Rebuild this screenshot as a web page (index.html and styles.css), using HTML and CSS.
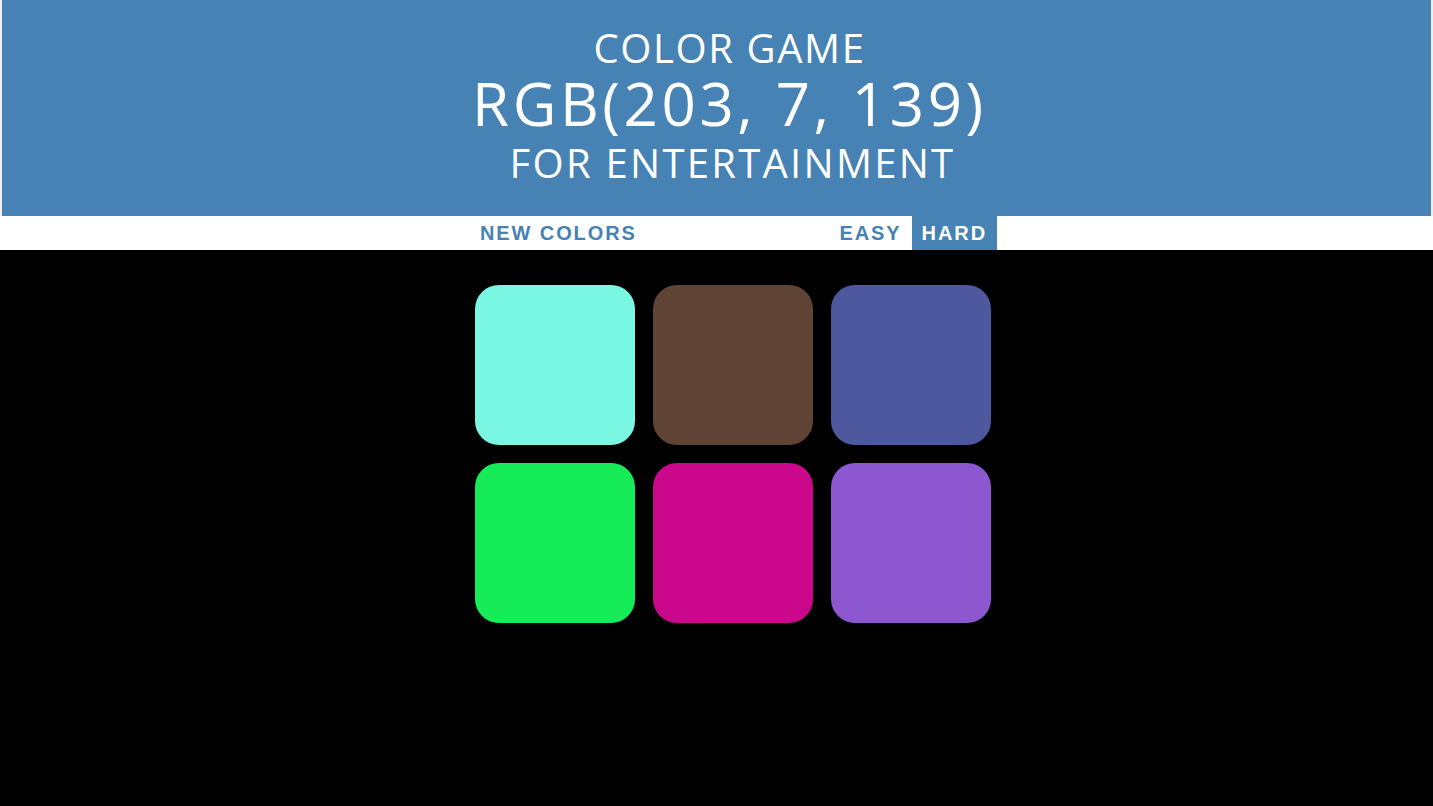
FILE: index.html
```html
<!DOCTYPE html>
<html lang="en">
<head>
<meta charset="utf-8">
<title>Color Game</title>
<link rel="stylesheet" href="styles.css">
</head>
<body>
<header class="header">
  <h1 class="title">
    <span class="title-top">COLOR GAME</span>
    <span class="title-rgb">RGB(203, 7, 139)</span>
    <span class="title-bottom">FOR ENTERTAINMENT</span>
  </h1>
</header>
<nav class="stripe">
  <div class="stripe-inner">
    <button class="btn btn-reset">NEW COLORS</button>
    <span class="message"></span>
    <div class="modes">
      <button class="btn">EASY</button>
      <button class="btn selected">HARD</button>
    </div>
  </div>
</nav>
<main class="board">
  <div class="grid">
    <div class="square sq1"></div>
    <div class="square sq2"></div>
    <div class="square sq3"></div>
    <div class="square sq4"></div>
    <div class="square sq5"></div>
    <div class="square sq6"></div>
  </div>
</main>
</body>
</html>
```
FILE: styles.css
```css
html, body {
  margin: 0;
  padding: 0;
  background: #000;
}
body {
  font-family: "Open Sans", "Liberation Sans", sans-serif;
  min-height: 806px;
}
.header {
  background: #4682b4;
  color: #fff;
  height: 216px;
  box-sizing: border-box;
  padding-top: 24px;
  border-left: 2px solid #eef2f6;
  border-right: 2px solid #eef2f6;
}
.title {
  margin: 0;
  padding-left: 26px;
  font-weight: 400;
  text-align: center;
  letter-spacing: 0.05em;
}
.title span { display: block; }
.title-top {
  font-size: 40px;
  line-height: 48px;
}
.title-rgb {
  font-size: 60px;
  line-height: 62px;
  letter-spacing: 0.06em;
}
.title-bottom {
  font-size: 40px;
  line-height: 58px;
  letter-spacing: 0.057em;
  padding-left: 6px;
}
.stripe {
  background: #fff;
  height: 34px;
  padding-left: 33px;
}
.stripe-inner {
  width: 534px;
  margin: 0 auto;
  height: 34px;
  display: flex;
  justify-content: space-between;
  box-sizing: border-box;
  padding: 0 3px 0 4px;
}
.modes { display: flex; }
.btn {
  border: none;
  background: #fff;
  color: #4682b4;
  font-family: "Liberation Sans", Arial, sans-serif;
  font-weight: 700;
  font-size: 20px;
  letter-spacing: 1.9px;
  line-height: 34px;
  height: 34px;
  padding: 0 10px;
  margin: 0;
}
.btn.selected {
  background: #4682b4;
  color: #fff;
}
.board {
  padding-left: 33px;
  padding-top: 26px;
}
.grid {
  width: 534px;
  margin: 0 auto;
  box-sizing: border-box;
  padding: 9px;
  display: grid;
  grid-template-columns: repeat(3, 160px);
  gap: 18px;
}
.square {
  width: 160px;
  height: 160px;
  border-radius: 24px;
}
.sq1 { background: rgb(121, 247, 227); }
.sq2 { background: rgb(95, 68, 53); }
.sq3 { background: rgb(77, 88, 158); }
.sq4 { background: rgb(22, 235, 88); }
.sq5 { background: rgb(203, 7, 139); }
.sq6 { background: rgb(140, 87, 207); }
```
